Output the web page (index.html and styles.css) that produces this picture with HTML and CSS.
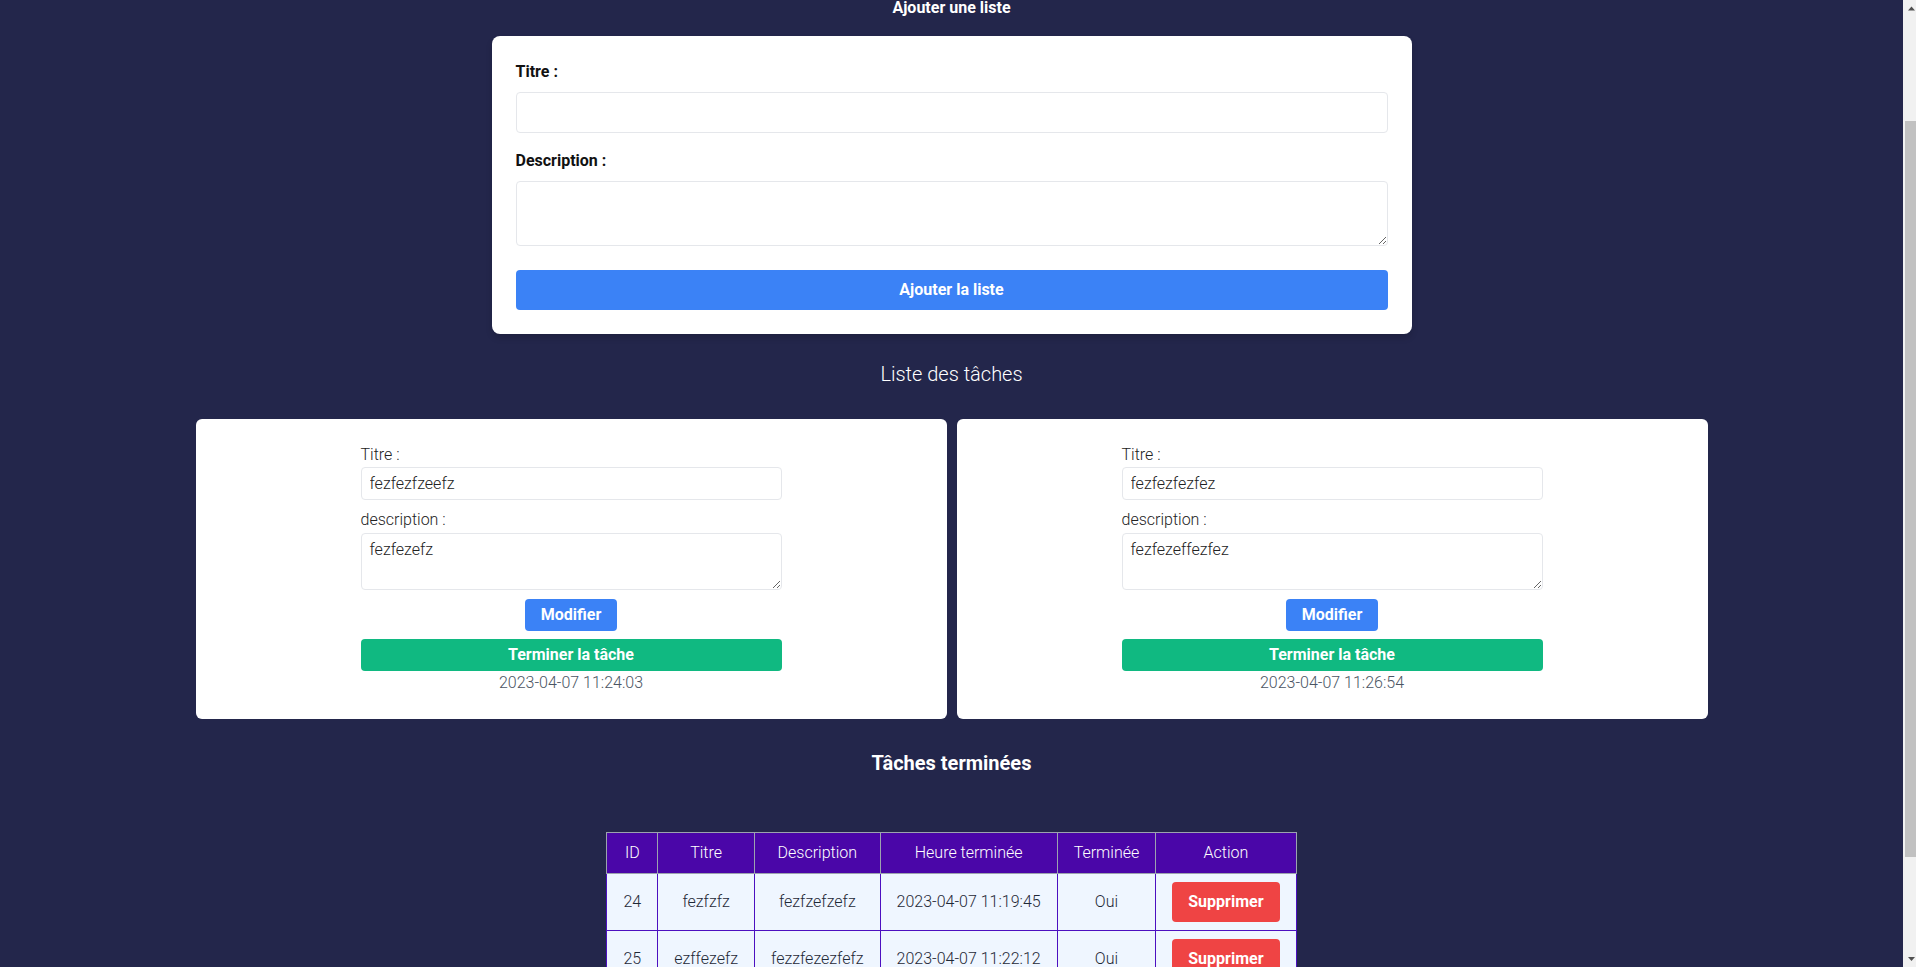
FILE: index.html
```html
<!DOCTYPE html>
<html lang="fr">
<head>
<meta charset="utf-8">
<title>Listes de tâches</title>
<link rel="stylesheet" href="styles.css">
</head>
<body>
<div class="page">
  <h2 class="form-title">Ajouter une liste</h2>
  <form class="form-card">
    <label class="form-label" for="new-title">Titre :</label>
    <input class="form-input" id="new-title" type="text">
    <label class="form-label" for="new-desc">Description :</label>
    <textarea class="form-textarea" id="new-desc"></textarea>
    <button class="btn btn-blue btn-add" type="button">Ajouter la liste</button>
  </form>

  <h2 class="section-title">Liste des tâches</h2>
  <div class="task-grid">
    <div class="task-card">
      <div class="task-form">
        <label class="task-label">Titre :</label>
        <input class="task-input" type="text" value="fezfezfzeefz">
        <label class="task-label">description :</label>
        <textarea class="task-textarea">fezfezefz</textarea>
        <div class="task-actions"><button class="btn btn-blue btn-small" type="button">Modifier</button></div>
        <button class="btn btn-green btn-finish" type="button">Terminer la tâche</button>
        <div class="task-date">2023-04-07 11:24:03</div>
      </div>
    </div>
    <div class="task-card">
      <div class="task-form">
        <label class="task-label">Titre :</label>
        <input class="task-input" type="text" value="fezfezfezfez">
        <label class="task-label">description :</label>
        <textarea class="task-textarea">fezfezeffezfez</textarea>
        <div class="task-actions"><button class="btn btn-blue btn-small" type="button">Modifier</button></div>
        <button class="btn btn-green btn-finish" type="button">Terminer la tâche</button>
        <div class="task-date">2023-04-07 11:26:54</div>
      </div>
    </div>
  </div>

  <h2 class="done-title">Tâches terminées</h2>
  <table class="done-table">
    <thead>
      <tr><th>ID</th><th>Titre</th><th>Description</th><th>Heure terminée</th><th>Terminée</th><th>Action</th></tr>
    </thead>
    <tbody>
      <tr><td>24</td><td>fezfzfz</td><td>fezfzefzefz</td><td>2023-04-07 11:19:45</td><td>Oui</td><td><button class="btn btn-red" type="button">Supprimer</button></td></tr>
      <tr><td>25</td><td>ezffezefz</td><td>fezzfezezfefz</td><td>2023-04-07 11:22:12</td><td>Oui</td><td><button class="btn btn-red" type="button">Supprimer</button></td></tr>
    </tbody>
  </table>
</div>

<div class="scrollbar" aria-hidden="true">
  <svg class="scroll-arrow" width="13" height="17" viewBox="0 0 13 17"><polygon points="5,10.5 8.5,6.5 12,10.5" fill="#505050"/></svg>
  <div class="scroll-track"><div class="scroll-thumb"></div></div>
  <svg class="scroll-arrow" width="13" height="17" viewBox="0 0 13 17"><polygon points="5,7 8.5,11 12,7" fill="#505050"/></svg>
</div>
<script src="script.js"></script>
</body>
</html>
```

FILE: styles.css
```css
html {
  background: #23264b;
}

body {
  margin: 0;
  background: #23264b;
  font-family: Roboto, "Liberation Sans", Arial, sans-serif;
  font-weight: 300;
  font-size: 16px;
  line-height: 24px;
  color: #1f2937;
}

.page {
  margin-right: 13px;
  padding: 138px 0 105px;
}

/* imitation of the browser's vertical scrollbar */
.scrollbar {
  position: fixed;
  top: 0;
  right: 0;
  bottom: 0;
  width: 13px;
  display: flex;
  flex-direction: column;
  background: #f1f1f1;
}

.scroll-arrow {
  display: block;
  flex: none;
}

.scroll-track {
  flex: 1;
  padding-top: 104px;
}

.scroll-thumb {
  width: 11px;
  height: 736px;
  margin-left: 2px;
  background: #c1c1c1;
}

.form-title {
  margin: 0 0 16px;
  text-align: center;
  font-size: 16px;
  line-height: 24px;
  font-weight: 700;
  color: #ffffff;
}

.form-card {
  box-sizing: border-box;
  width: 920px;
  margin: 0 auto;
  padding: 24px;
  background: #ffffff;
  border-radius: 8px;
  box-shadow: 0 4px 6px rgba(0, 0, 0, 0.15);
}

.form-label {
  display: block;
  margin-bottom: 8px;
  font-weight: 700;
  color: #111111;
}

.form-input,
.form-textarea,
.task-input,
.task-textarea {
  display: block;
  box-sizing: border-box;
  width: 100%;
  margin: 0;
  border: 1px solid #e5e7eb;
  border-radius: 4px;
  background: #ffffff;
  font-family: inherit;
  font-weight: 300;
  font-size: 16px;
  color: #222222;
  outline: none;
}

.form-input {
  height: 41px;
  margin-bottom: 16px;
  padding: 8px 12px;
}

.form-textarea {
  height: 65px;
  margin-bottom: 24px;
  padding: 8px 12px;
}

.btn {
  border: 0;
  border-radius: 4px;
  font-family: inherit;
  font-weight: 700;
  font-size: 16px;
  line-height: 24px;
  color: #ffffff;
  cursor: pointer;
}

.btn-blue { background: #3b82f6; }
.btn-green { background: #10b981; }
.btn-red { background: #ef4444; }

.btn-add {
  display: block;
  width: 100%;
  height: 40px;
  padding: 8px 16px;
}

.section-title {
  margin: 26px 0 31px;
  text-align: center;
  font-size: 20px;
  line-height: 28px;
  font-weight: 300;
  color: #ffffff;
}

.task-grid {
  display: grid;
  grid-template-columns: 751px 751px;
  gap: 10px;
  justify-content: center;
}

.task-card {
  padding: 24px;
  background: #ffffff;
  border-radius: 6px;
}

.task-form {
  width: 421px;
  margin: 0 auto;
}

.task-label {
  display: block;
  color: #222222;
}

.task-input {
  height: 33px;
  margin-bottom: 8px;
  padding: 4px 8px;
  line-height: 23px;
}

.task-textarea {
  height: 57px;
  margin-top: 1px;
  margin-bottom: 9px;
  padding: 4px 8px;
  line-height: 23px;
  resize: vertical;
}

.task-actions {
  display: flex;
  justify-content: center;
  margin-bottom: 8px;
}

.btn-small {
  height: 32px;
  padding: 4px 16px;
}

.btn-finish {
  display: block;
  width: 100%;
  height: 32px;
  padding: 4px 16px;
}

.task-date {
  text-align: center;
  color: #4b5563;
}

.done-title {
  margin: 30px 0 55px;
  text-align: center;
  font-size: 20px;
  line-height: 28px;
  font-weight: 700;
  color: #ffffff;
}

.done-table {
  margin: 0 auto;
  border-collapse: collapse;
}

.done-table th {
  padding: 8px 16px;
  background: #4a06a8;
  border: 1px solid #9ca3af;
  color: #ffffff;
  font-weight: 300;
  text-align: center;
}

.done-table td {
  padding: 8px 16px;
  background: #eff6ff;
  border: 1px solid #4c10c0;
  text-align: center;
  color: #1f2937;
}

.btn-red {
  display: block;
  height: 40px;
  margin: 0 auto;
  padding: 8px 16px;
}
```

FILE: script.js
```js
window.scrollTo(0, 142);
window.addEventListener('load', function () {
  window.scrollTo(0, 142);
});
```
